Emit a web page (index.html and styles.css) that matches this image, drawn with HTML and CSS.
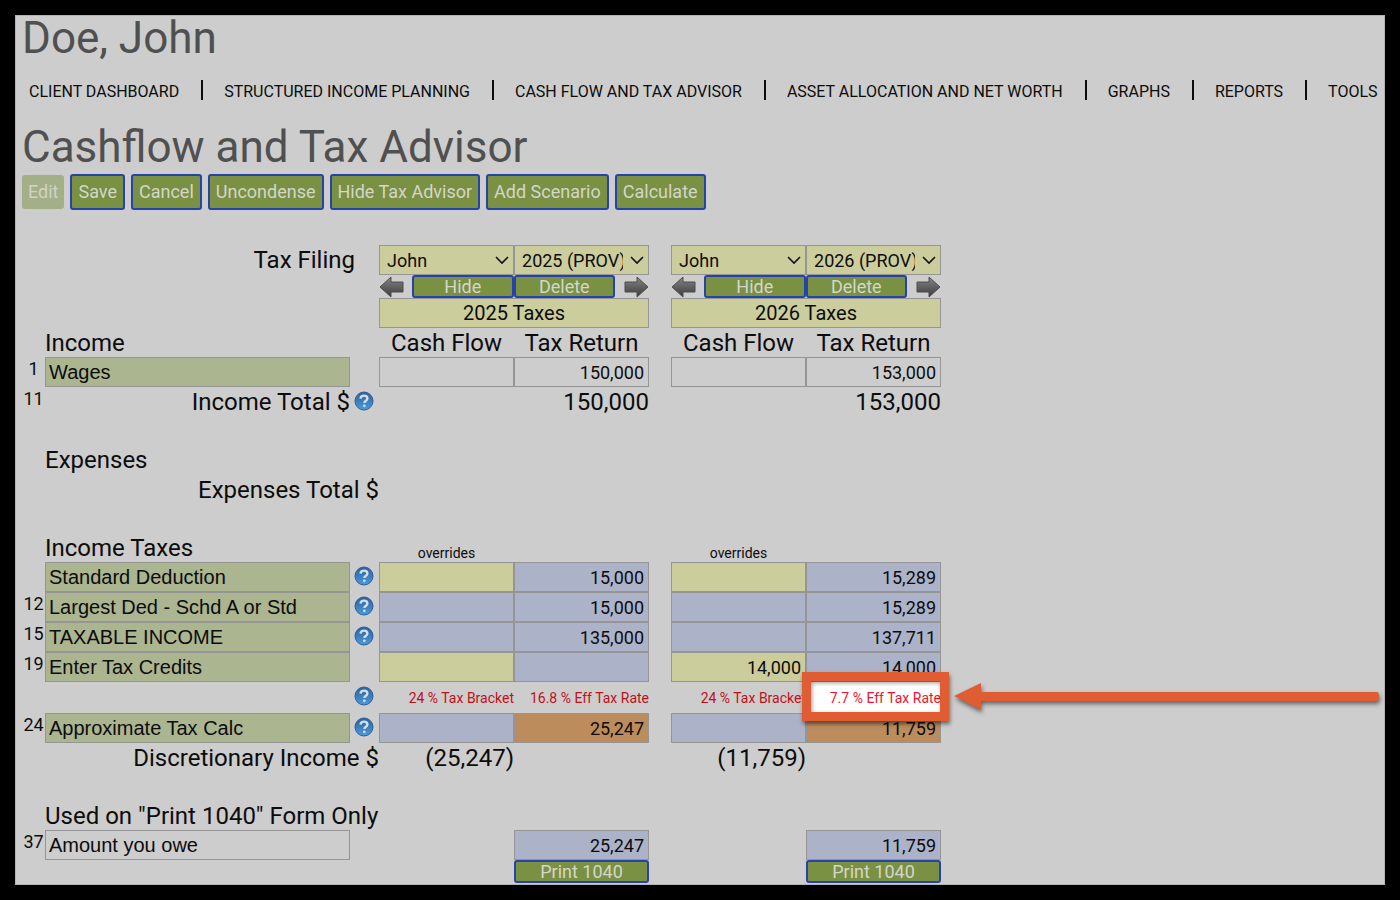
FILE: index.html
```html
<!DOCTYPE html>
<html lang="en">
<head>
<meta charset="UTF-8">
<meta name="viewport" content="width=device-width, initial-scale=1.0">
<title>Cashflow and Tax Advisor</title>
<link rel="stylesheet" href="styles.css">
</head>
<body>
<!-- shared icons -->
<svg class="sprite" aria-hidden="true">
    <defs>
        <linearGradient id="helpFill" x1="0" y1="0" x2="0" y2="1">
            <stop offset="0" stop-color="#2c5f9e"/>
            <stop offset="1" stop-color="#4a9bdc"/>
        </linearGradient>
        <linearGradient id="arrowFill" x1="0" y1="0" x2="0" y2="1">
            <stop offset="0" stop-color="#858585"/>
            <stop offset="1" stop-color="#3c3c3c"/>
        </linearGradient>
    </defs>
    <symbol id="help" viewBox="0 0 20 20">
        <circle cx="10" cy="10" r="9" fill="url(#helpFill)" stroke="#2d5d9c" stroke-width="1"/>
        <path d="M6.500 7.600c.2-2 1.600-3 3.500-3 2 0 3.400 1.100 3.400 2.800 0 2.300-3 2.400-3 4.600" fill="none" stroke="#d5dde6" stroke-width="2.400"/>
        <circle cx="10.300" cy="14.800" r="1.400" fill="#d5dde6"/>
    </symbol>
    <symbol id="arrow" viewBox="0 0 25 22">
        <path d="M1 11L12 1v5h12v10H12v5z" fill="url(#arrowFill)" stroke="#4d4d4d" stroke-width="1" stroke-linejoin="round"/>
    </symbol>
    <symbol id="chevron" viewBox="0 0 14 9">
        <path d="M1 1l6 6 6-6" fill="none" stroke="#111" stroke-width="1.600"/>
    </symbol>
</svg>

<main class="page">
    <h1>Doe, John</h1>
    <nav class="menu">
        <a href="#">Client Dashboard</a>
        <a href="#">Structured Income Planning</a>
        <a href="#">Cash Flow and Tax Advisor</a>
        <a href="#">Asset Allocation and Net Worth</a>
        <a href="#">Graphs</a>
        <a href="#">Reports</a>
        <a href="#">Tools</a>
    </nav>
    <h1>Cashflow and Tax Advisor</h1>
    <div class="toolbar">
        <button disabled>Edit</button>
        <button>Save</button>
        <button>Cancel</button>
        <button>Uncondense</button>
        <button>Hide Tax Advisor</button>
        <button>Add Scenario</button>
        <button>Calculate</button>
    </div>

    <table class="sheet">
        <colgroup>
            <col class="c-line"><col class="c-label"><col class="c-help">
            <col class="c-num"><col class="c-num"><col class="c-gap">
            <col class="c-num"><col class="c-num">
        </colgroup>
        <tbody>
            <tr>
                <td></td>
                <td colspan="2" class="filing">Tax Filing</td>
                <td><div class="select"><select aria-label="2025 filer"><option>John</option></select><svg><use href="#chevron"/></svg></div></td>
                <td><div class="select"><select aria-label="2025 tax year"><option>2025 (PROV)</option></select><svg><use href="#chevron"/></svg></div></td>
                <td></td>
                <td><div class="select"><select aria-label="2026 filer"><option>John</option></select><svg><use href="#chevron"/></svg></div></td>
                <td><div class="select"><select aria-label="2026 tax year"><option>2026 (PROV)</option></select><svg><use href="#chevron"/></svg></div></td>
            </tr>
            <tr class="short">
                <td colspan="3"></td>
                <td colspan="2"><div class="moves">
                    <svg class="move"><use href="#arrow"/></svg>
                    <button>Hide</button><button>Delete</button>
                    <svg class="move right"><use href="#arrow"/></svg>
                </div></td>
                <td></td>
                <td colspan="2"><div class="moves">
                    <svg class="move"><use href="#arrow"/></svg>
                    <button>Hide</button><button>Delete</button>
                    <svg class="move right"><use href="#arrow"/></svg>
                </div></td>
            </tr>
            <tr>
                <td colspan="3"></td>
                <td colspan="2"><input class="title" aria-label="2025 title" value="2025 Taxes"></td>
                <td></td>
                <td colspan="2"><input class="title" aria-label="2026 title" value="2026 Taxes"></td>
            </tr>
            <tr class="heading">
                <td></td>
                <th colspan="2">Income</th>
                <th class="center">Cash Flow</th>
                <th class="center">Tax Return</th>
                <td></td>
                <th class="center">Cash Flow</th>
                <th class="center">Tax Return</th>
            </tr>
            <tr>
                <td class="line">1</td>
                <td><input class="name" aria-label="Line 1" value="Wages"></td>
                <td></td>
                <td><input class="plain" aria-label="Wages cash flow 2025"></td>
                <td><input class="plain" aria-label="Wages 2025" value="150,000"></td>
                <td></td>
                <td><input class="plain" aria-label="Wages cash flow 2026"></td>
                <td><input class="plain" aria-label="Wages 2026" value="153,000"></td>
            </tr>
            <tr>
                <td class="line">11</td>
                <td class="sum">Income Total $</td>
                <td class="help"><svg><use href="#help"/></svg></td>
                <td></td>
                <td class="sum">150,000</td>
                <td></td>
                <td></td>
                <td class="sum">153,000</td>
            </tr>
            <tr class="space"><td colspan="8"></td></tr>
            <tr>
                <td></td>
                <th colspan="7">Expenses</th>
            </tr>
            <tr>
                <td></td>
                <td colspan="2" class="sum">Expenses Total $</td>
                <td colspan="5"></td>
            </tr>
            <tr class="space"><td colspan="8"></td></tr>
            <tr class="heading">
                <td></td>
                <th colspan="2">Income Taxes</th>
                <td class="note">overrides</td>
                <td></td>
                <td></td>
                <td class="note">overrides</td>
                <td></td>
            </tr>
            <tr>
                <td></td>
                <td><input class="name" aria-label="Line name" value="Standard Deduction"></td>
                <td class="help"><svg><use href="#help"/></svg></td>
                <td><input class="edit" aria-label="Standard deduction override 2025"></td>
                <td><input class="calc" aria-label="Standard deduction 2025" value="15,000" readonly></td>
                <td></td>
                <td><input class="edit" aria-label="Standard deduction override 2026"></td>
                <td><input class="calc" aria-label="Standard deduction 2026" value="15,289" readonly></td>
            </tr>
            <tr>
                <td class="line">12</td>
                <td><input class="name" aria-label="Line 12" value="Largest Ded - Schd A or Std"></td>
                <td class="help"><svg><use href="#help"/></svg></td>
                <td><input class="calc" aria-label="Largest deduction cash flow 2025" readonly></td>
                <td><input class="calc" aria-label="Largest deduction 2025" value="15,000" readonly></td>
                <td></td>
                <td><input class="calc" aria-label="Largest deduction cash flow 2026" readonly></td>
                <td><input class="calc" aria-label="Largest deduction 2026" value="15,289" readonly></td>
            </tr>
            <tr>
                <td class="line">15</td>
                <td><input class="name" aria-label="Line 15" value="TAXABLE INCOME"></td>
                <td class="help"><svg><use href="#help"/></svg></td>
                <td><input class="calc" aria-label="Taxable income cash flow 2025" readonly></td>
                <td><input class="calc" aria-label="Taxable income 2025" value="135,000" readonly></td>
                <td></td>
                <td><input class="calc" aria-label="Taxable income cash flow 2026" readonly></td>
                <td><input class="calc" aria-label="Taxable income 2026" value="137,711" readonly></td>
            </tr>
            <tr>
                <td class="line">19</td>
                <td><input class="name" aria-label="Line 19" value="Enter Tax Credits"></td>
                <td></td>
                <td><input class="edit" aria-label="Tax credits override 2025"></td>
                <td><input class="calc" aria-label="Tax credits 2025" readonly></td>
                <td></td>
                <td><input class="edit" aria-label="Tax credits override 2026" value="14,000"></td>
                <td><input class="calc" aria-label="Tax credits 2026" value="14,000" readonly></td>
            </tr>
            <tr class="rates">
                <td></td>
                <td></td>
                <td class="help"><svg><use href="#help"/></svg></td>
                <td class="rate">24 % Tax Bracket</td>
                <td class="rate">16.8 % Eff Tax Rate</td>
                <td></td>
                <td class="rate">24 % Tax Bracket</td>
                <td class="rate marked">7.7 % Eff Tax Rate
                    <span class="frame"></span>
                    <svg class="pointer" viewBox="0 0 426 30"><path d="M0 14L27 1v9h396q2 0 2 4t-2 5H27v9z" fill="#e05c33"/></svg>
                </td>
            </tr>
            <tr>
                <td class="line">24</td>
                <td><input class="name" aria-label="Line 24" value="Approximate Tax Calc"></td>
                <td class="help"><svg><use href="#help"/></svg></td>
                <td><input class="calc" aria-label="Tax calc cash flow 2025" readonly></td>
                <td><input class="due" aria-label="Tax calc 2025" value="25,247" readonly></td>
                <td></td>
                <td><input class="calc" aria-label="Tax calc cash flow 2026" readonly></td>
                <td><input class="due" aria-label="Tax calc 2026" value="11,759" readonly></td>
            </tr>
            <tr>
                <td></td>
                <td colspan="2" class="sum">Discretionary Income $</td>
                <td class="sum">(25,247)</td>
                <td></td>
                <td></td>
                <td class="sum">(11,759)</td>
                <td></td>
            </tr>
            <tr class="space"><td colspan="8"></td></tr>
            <tr class="heading">
                <td></td>
                <th colspan="7">Used on "Print 1040" Form Only</th>
            </tr>
            <tr>
                <td class="line">37</td>
                <td><input class="name plain" aria-label="Line 37" value="Amount you owe"></td>
                <td></td>
                <td></td>
                <td><input class="calc" aria-label="Amount you owe 2025" value="25,247" readonly></td>
                <td></td>
                <td></td>
                <td><input class="calc" aria-label="Amount you owe 2026" value="11,759" readonly></td>
            </tr>
            <tr class="short">
                <td colspan="4"></td>
                <td><button class="print">Print 1040</button></td>
                <td></td>
                <td></td>
                <td><button class="print">Print 1040</button></td>
            </tr>
        </tbody>
    </table>
</main>
</body>
</html>
```
FILE: styles.css
```css
* {
    box-sizing: border-box;
}
body {
    margin: 0;
    padding: 15px;
    background: #000;
    font-family: Roboto, Arial, sans-serif;
    color: #0c0c0c;
}
.sprite {
    position: absolute;
    width: 0;
    height: 0;
}
.page {
    background: #cdcdcd;
    border: 1px solid #b4b4b4;
    padding: 0 0 1px 6px;
}
h1 {
    margin: 0;
    font-size: 44px;
    font-weight: 400;
    line-height: 44px;
    color: #505050;
}

/* Menu */
.menu {
    display: flex;
    align-items: center;
    height: 65px;
    padding: 0 0 3px 7px;
    white-space: nowrap;
}
.menu a {
    display: flex;
    align-items: center;
    color: #0c0c0c;
    font-size: 16px;
    text-decoration: none;
    text-transform: uppercase;
}
.menu a + a::before {
    content: "";
    width: 2px;
    height: 20px;
    margin: 0 21px 2px 22px;
    background: #0c0c0c;
}

/* Buttons */
button {
    padding: 0;
    border: 2px solid #2643a6;
    border-radius: 3px;
    background: #7a9042;
    color: #d4d6cc;
    font-family: inherit;
    font-size: 18px;
    line-height: 18px;
}
.toolbar {
    display: flex;
    align-items: center;
    gap: 6px;
    margin-top: 5px;
}
.toolbar button {
    height: 36px;
    padding: 0 6px;
}
.toolbar button:disabled {
    height: 34px;
    border: 0;
    background: #a3af86;
    color: #cfd3c5;
}

/* Sheet */
.sheet {
    width: 919px;
    margin-top: 35px;
    border-collapse: collapse;
    table-layout: fixed;
}
.c-line { width: 23px; }
.c-label { width: 305px; }
.c-help { width: 29px; }
.c-num { width: 135px; }
.c-gap { width: 22px; }
.sheet td,
.sheet th {
    height: 30px;
    padding: 0;
    font-size: 24px;
    font-weight: 400;
    line-height: 28px;
    text-align: left;
    white-space: nowrap;
}
.sheet .heading td,
.sheet .heading th {
    height: 29px;
}
.sheet .short td {
    height: 23px;
}
.sheet .space td {
    height: 28px;
}
.sheet .rates td {
    height: 31px;
}
.sheet .center {
    text-align: center;
}
.sheet .sum {
    text-align: right;
}
.sheet .filing {
    padding-right: 24px;
    text-align: right;
}
.sheet .line {
    font-size: 18px;
    line-height: 24px;
    text-align: center;
    vertical-align: top;
}
.sheet .note {
    font-size: 14px;
    line-height: 18px;
    text-align: center;
    vertical-align: bottom;
}
.sheet .rate {
    color: #c0101a;
    font-size: 14px;
    text-align: right;
}
.sheet .help {
    padding: 4px 0 0 4px;
    vertical-align: top;
}
.help svg {
    display: block;
    width: 20px;
    height: 20px;
}
input,
select {
    display: block;
    width: 100%;
    height: 30px;
    padding: 0 4px;
    border: 1px solid #959595;
    border-radius: 0;
    background: #cccd9c;
    color: #0c0c0c;
    font-family: inherit;
    font-size: 18px;
    text-align: right;
}
.title {
    font-size: 20px;
    text-align: center;
}
.name {
    padding: 0 3px;
    background: #abb590;
    font-family: "Liberation Sans", Arial, sans-serif;
    font-size: 20px;
    text-align: left;
}
.calc {
    background: #acb2c8;
}
.due {
    background: #bd8c5c;
}
.plain {
    background: #cdcdcd;
}
.select {
    position: relative;
}
select {
    appearance: none;
    padding: 0 25px 0 7px;
    text-align: left;
}
.select svg {
    position: absolute;
    top: 11px;
    right: 5px;
    width: 14px;
    height: 9px;
    pointer-events: none;
}
.moves {
    display: flex;
    align-items: center;
    height: 23px;
}
.moves button {
    flex: 1;
    height: 23px;
}
.move {
    width: 25px;
    height: 22px;
    margin-right: 8px;
}
.move.right {
    margin: 0 0 0 9px;
    transform: scaleX(-1);
}
.print {
    display: block;
    width: 100%;
    height: 23px;
}

/* Callout over the effective rate */
.sheet .marked {
    position: relative;
    background: #fff;
    color: #f0142c;
}
.frame {
    position: absolute;
    top: -10px;
    right: -8px;
    bottom: -8px;
    left: -4px;
    border: 9px solid #e05c33;
    box-shadow: 1px 3px 4px rgba(0, 0, 0, 0.5), inset 1px 2px 4px rgba(0, 0, 0, 0.4);
}
.pointer {
    position: absolute;
    top: 0;
    left: 100%;
    width: 426px;
    height: 30px;
    margin-left: 13px;
    filter: drop-shadow(1px 3px 2px rgba(0, 0, 0, 0.5));
}
```
